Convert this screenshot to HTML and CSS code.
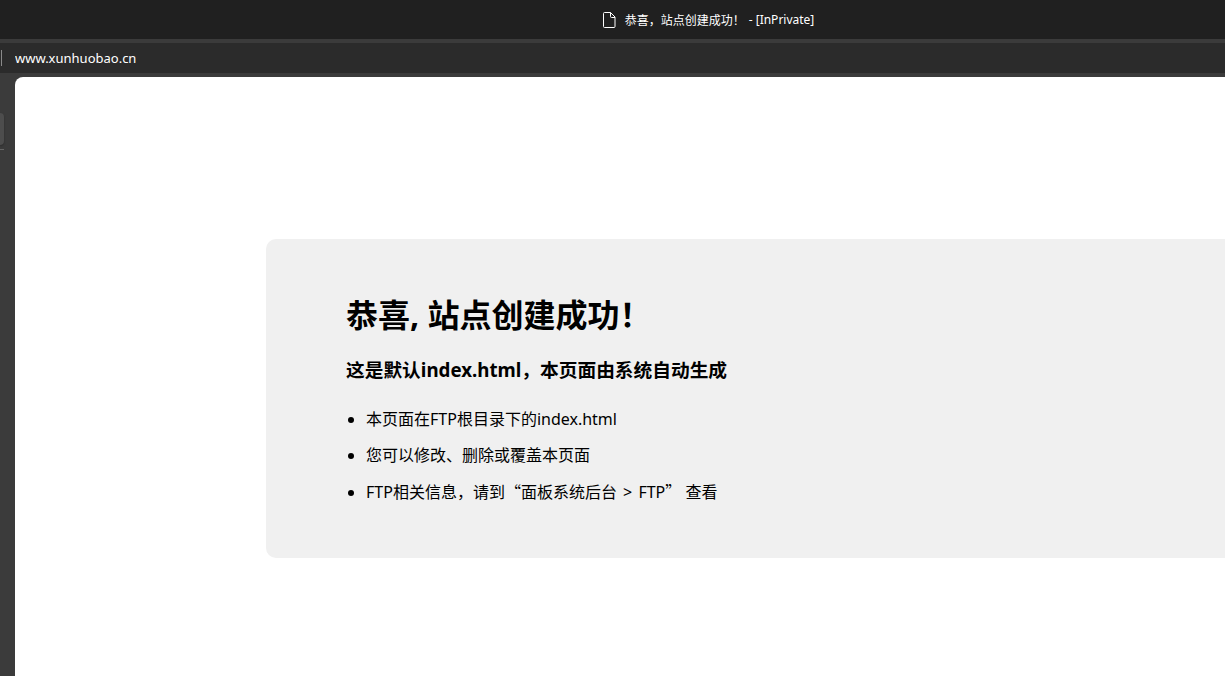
FILE: index.html
```html
<!DOCTYPE html>
<html lang="zh-CN">

<head>
    <meta charset="UTF-8">
    <meta name="viewport" content="width=device-width, initial-scale=1.0">
    <title>恭喜，站点创建成功！</title>
    <link rel="stylesheet" href="styles.css">
</head>

<body>

    <!-- Title bar -->
    <header class="titlebar">
        <svg class="page-icon" width="13" height="16" viewBox="0 0 13 16" fill="none" stroke="#ffffff" aria-hidden="true">
            <path d="M1.5 .5H7.5L12 5V14.5A1 1 0 0 1 11 15.5H1.5A1 1 0 0 1 .5 14.5V1.5A1 1 0 0 1 1.5 .5Z" />
            <path d="M7.5 .5V4.5A1 1 0 0 0 8.5 5.5H12" />
        </svg>
        <span class="tab-title">恭喜，站点创建成功！</span>
        <span>- [InPrivate]</span>
    </header>

    <!-- Address bar -->
    <div class="addressbar">
        <input class="address" type="text" value="www.xunhuobao.cn" aria-label="地址栏">
    </div>

    <div class="window">
        <!-- Vertical tabs -->
        <aside class="sidebar">
            <button class="tab" type="button" aria-label="恭喜，站点创建成功！"></button>
        </aside>

        <!-- Page -->
        <main class="page">
            <div class="container">
                <h1>恭喜, 站点创建成功！</h1>
                <h3>这是默认index.html，本页面由系统自动生成</h3>
                <ul>
                    <li>本页面在FTP根目录下的index.html</li>
                    <li>您可以修改、删除或覆盖本页面</li>
                    <li>FTP相关信息，请到<span class="quote">“</span>面板系统后台 <span class="arrow">&gt;</span> FTP<span class="quote">”</span> 查看</li>
                </ul>
            </div>
        </main>
    </div>

</body>

</html>
```
FILE: styles.css
```css
* {
    box-sizing: border-box;
}

body {
    margin: 0;
    min-height: 100vh;
    display: flex;
    flex-direction: column;
    overflow: hidden;
    background-color: #3b3b3b;
    color: #000000;
    font-family: "Noto Sans", "Noto Sans CJK SC", sans-serif;
    font-size: 16px;
}

/* Browser bars */
.titlebar {
    display: flex;
    justify-content: center;
    align-items: center;
    height: 39px;
    padding-left: 192px;
    background-color: #202020;
    color: #ffffff;
    font-size: 12px;
}

.page-icon {
    margin-right: 9px;
}

.tab-title {
    margin-right: 4px;
}

.addressbar {
    display: flex;
    align-items: center;
    height: 30px;
    margin: 4px 0;
    padding-left: 1px;
    background-color: #2b2b2b;
}

.address {
    flex: 1;
    height: 16px;
    padding: 0 13px;
    border: 0;
    border-left: 1px solid #8a8a8a;
    outline: none;
    background: none;
    color: #ffffff;
    font-family: inherit;
    font-size: 13px;
}

.window {
    flex: 1;
    display: flex;
}

.sidebar {
    width: 15px;
    padding-top: 36px;
}

.tab {
    display: block;
    width: 4px;
    height: 32px;
    padding: 0;
    border: 0;
    border-radius: 0 4px 4px 0;
    background-color: #4d4d4d;
    box-shadow: 0 1px 2px #2b2b2b;
}

.sidebar::after {
    content: "";
    display: block;
    width: 4px;
    height: 1px;
    margin-top: 4px;
    background-color: #666666;
}

/* Page content */
.page {
    flex: 1;
    padding: 162px 0 0 251px;
    border-top-left-radius: 8px;
    background-color: #ffffff;
}

.container {
    padding: 52px 80px 48px;
    border-radius: 10px 0 0 10px;
    background-color: #f0f0f0;
}

h1 {
    margin: 0 0 17px;
    font-size: 32px;
    line-height: 48px;
}

h3 {
    margin: 0 0 17px;
    line-height: 28px;
}

ul {
    margin: 0;
    padding-left: 20px;
}

li {
    line-height: 36px;
}

.quote {
    font-family: "Noto Sans CJK SC", sans-serif;
}

.arrow {
    margin: 0 2px;
}
```
